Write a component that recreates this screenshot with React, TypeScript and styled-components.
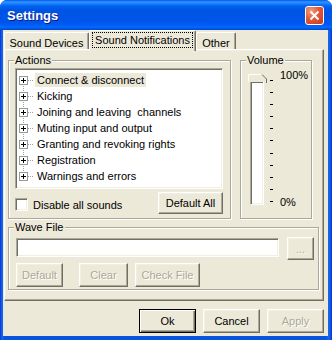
import React from 'react';
import styled, { createGlobalStyle } from 'styled-components';

const GlobalStyle = createGlobalStyle`
  html, body {
    margin: 0;
    padding: 0;
    background: #ffffff;
  }
  body {
    font-family: "Liberation Sans", Arial, sans-serif;
    font-size: 11px;
    color: #000;
  }
`;

const Window = styled.div`
  width: 332px;
  height: 340px;
  display: flex;
  flex-direction: column;
  background: #0a4fe0;
  border-radius: 7px 7px 0 0;
  overflow: hidden;
`;

// XP luna title bar
const TitleBar = styled.div`
  height: 30px;
  flex: none;
  display: flex;
  align-items: center;
  justify-content: space-between;
  padding: 0 8px 0 7px;
  box-sizing: border-box;
  background: linear-gradient(
    to bottom,
    #0058ee 0px,
    #3593ff 2px,
    #127dff 4px,
    #0262ee 6px,
    #0054e3 10px,
    #0055eb 22px,
    #005bf5 25px,
    #026afe 27px,
    #0062ef 28px,
    #0043cf 30px
  );
`;

const TitleText = styled.span`
  color: #fff;
  font-weight: bold;
  font-size: 13px;
  text-shadow: 1px 1px 0 #0a1883;
  margin-top: 1px;
`;

const CloseButton = styled.div`
  width: 19px;
  height: 19px;
  box-sizing: border-box;
  border: 1px solid #fff;
  border-radius: 3px;
  background: radial-gradient(circle at 30% 25%, #f0a080 0%, #e2583a 45%, #c9371b 100%);
  display: flex;
  align-items: center;
  justify-content: center;
  margin-top: 1px;
`;

const Frame = styled.div`
  flex: 1;
  display: flex;
  padding: 0 4px 4px 3px;
  background: linear-gradient(to right, #0831d9 0px, #166aee 2px, #0855dd 4px, #0855dd 326px, #166aee 329px, #0831d9 332px);
`;

const Client = styled.div`
  flex: 1;
  display: flex;
  flex-direction: column;
  background: #ece9d8;
  padding: 0 4px 0 1px;
`;

const TabStrip = styled.div`
  height: 19px;
  display: flex;
  align-items: flex-end;
`;

const Tab = styled.div<{ $active?: boolean; $w: number }>`
  position: relative;
  z-index: ${p => (p.$active ? 1 : 0)};
  box-sizing: border-box;
  width: ${p => p.$w}px;
  height: ${p => (p.$active ? 21 : 17)}px;
  margin-bottom: ${p => (p.$active ? -2 : 0)}px;
  background: #ece9d8;
  border-top: 1px solid #fff;
  border-left: 1px solid #fff;
  border-right: 1px solid #716f64;
  box-shadow: inset -1px 0 0 #aca899;
  border-radius: 2px 2px 0 0;
  display: flex;
  justify-content: center;
  padding-top: ${p => (p.$active ? 1 : 2)}px;
`;

const TabLabel = styled.span<{ $focus?: boolean }>`
  height: 14px;
  line-height: 14px;
  padding: 0 2px;
  border: 1px dotted ${p => (p.$focus ? '#000' : 'transparent')};
`;

const Panel = styled.div`
  height: 252px;
  box-sizing: border-box;
  border: 1px solid;
  border-color: #fff #716f64 #716f64 #fff;
  box-shadow: inset -1px -1px 0 #aca899, inset 1px 1px 0 #f1efe2;
  padding: 10px 0 0 3px;
  display: flex;
  flex-direction: column;
  gap: 8px;
`;

const TopRow = styled.div`
  display: flex;
  gap: 9px;
`;

// etched group box
const Group = styled.div<{ $w: number; $h: number }>`
  position: relative;
  box-sizing: border-box;
  width: ${p => p.$w}px;
  height: ${p => p.$h}px;
  border: 1px solid #aca899;
  box-shadow: inset 1px 1px 0 #fff, 1px 1px 0 #fff;
`;

const GroupLabel = styled.span`
  position: absolute;
  top: -7px;
  left: 5px;
  padding: 0 1px;
  line-height: 13px;
  background: #ece9d8;
`;

const ActionsBody = styled.div`
  padding: 7px 0 0 6px;
  display: flex;
  flex-direction: column;
`;

const Sunken = styled.div`
  box-sizing: border-box;
  background: #fff;
  border: 1px solid;
  border-color: #aca899 #fff #fff #aca899;
  box-shadow: inset 1px 1px 0 #716f64, inset -1px -1px 0 #f1efe2;
`;

const TreeBox = styled(Sunken)`
  width: 208px;
  height: 121px;
  padding: 3px 0 0 3px;
`;

const TreeRow = styled.div`
  height: 16px;
  display: flex;
  align-items: center;
`;

const TreeText = styled.span<{ $selected?: boolean }>`
  margin-left: 1px;
  padding: 0 2px;
  line-height: 14px;
  white-space: pre;
  background: ${p => (p.$selected ? '#ece9d8' : 'transparent')};
`;

const ActionsFooter = styled.div`
  display: flex;
  justify-content: space-between;
  align-items: flex-start;
  width: 208px;
  margin-top: 3px;
`;

const CheckRow = styled.label`
  display: flex;
  align-items: center;
  gap: 5px;
  margin-top: 6px;
`;

const CheckBox = styled(Sunken)`
  width: 13px;
  height: 13px;
`;

const Button = styled.button<{ $w: number; $h?: number; $default?: boolean; $ml?: number }>`
  box-sizing: border-box;
  width: ${p => p.$w}px;
  height: ${p => p.$h ?? 23}px;
  padding: 0;
  margin: 0 0 0 ${p => p.$ml ?? 0}px;
  font-family: "Liberation Sans", Arial, sans-serif;
  font-size: 11px;
  background: #ece9d8;
  color: #000;
  border: 1px solid;
  border-color: ${p => (p.$default ? '#000' : '#fff #716f64 #716f64 #fff')};
  box-shadow: ${p =>
    p.$default
      ? 'inset 1px 1px 0 #fff, inset -1px -1px 0 #716f64, inset -2px -2px 0 #aca899'
      : 'inset -1px -1px 0 #aca899, inset 1px 1px 0 #f1efe2'};
  &:disabled {
    color: #aca899;
    text-shadow: 1px 1px 0 #fff;
  }
`;

const VolumeBody = styled.div`
  display: flex;
  padding: 13px 0 0 7px;
`;

const SliderBox = styled.div`
  position: relative;
  width: 19px;
  height: 132px;
`;

const Track = styled(Sunken)`
  margin: 7px 0 0 2px;
  width: 14px;
  height: 124px;
`;

const Thumb = styled.svg`
  position: absolute;
  top: 0;
  left: 0;
`;

const Ticks = styled.div`
  margin: 6px 0 0 3px;
  height: 122px;
  display: flex;
  flex-direction: column;
  justify-content: space-between;
`;

const Tick = styled.div`
  width: 3px;
  height: 1px;
  background: #000;
`;

const ScaleLabels = styled.div`
  margin: -5px 0 0 7px;
  height: 140px;
  display: flex;
  flex-direction: column;
  justify-content: space-between;
  line-height: 13px;
`;

const WaveBody = styled.div`
  padding: 9px 0 0 7px;
  display: flex;
  flex-direction: column;
`;

const WaveRow = styled.div`
  display: flex;
  align-items: flex-start;
`;

const TextField = styled(Sunken)`
  width: 263px;
  height: 19px;
  margin-top: 1px;
`;

const ButtonRow = styled.div`
  display: flex;
  gap: 7px;
  margin-top: 3px;
`;

const DialogButtons = styled.div`
  display: flex;
  justify-content: flex-end;
  gap: 7px;
  margin-top: 8px;
`;

const actions = [
  'Connect & disconnect',
  'Kicking',
  'Joining and leaving  channels',
  'Muting input and output',
  'Granting and revoking rights',
  'Registration',
  'Warnings and errors',
];

const Expander: React.FC<{ first: boolean; last: boolean }> = ({ first, last }) => (
  <svg width="15" height="16" viewBox="0 0 15 16">
    <line
      x1="4.5"
      y1={first ? 8 : 0}
      x2="4.5"
      y2={last ? 8 : 16}
      stroke="#a0a0a0"
      strokeDasharray="1 1"
    />
    <line x1="9" y1="8.5" x2="15" y2="8.5" stroke="#a0a0a0" strokeDasharray="1 1" />
    <rect x="0.5" y="4.5" width="8" height="8" fill="#fff" stroke="#919b9c" />
    <line x1="2" y1="8.5" x2="7" y2="8.5" stroke="#000" />
    <line x1="4.5" y1="6" x2="4.5" y2="11" stroke="#000" />
  </svg>
);

export default function App() {
  return (
    <>
      <GlobalStyle />
      <Window>
        <TitleBar>
          <TitleText>Settings</TitleText>
          <CloseButton>
            <svg width="11" height="11" viewBox="0 0 11 11">
              <path d="M1.5 1.5 L9.5 9.5 M9.5 1.5 L1.5 9.5" stroke="#fff" strokeWidth="2" />
            </svg>
          </CloseButton>
        </TitleBar>
        <Frame>
          <Client>
            <TabStrip>
              <Tab $w={85}>
                <TabLabel>Sound Devices</TabLabel>
              </Tab>
              <Tab $w={107} $active>
                <TabLabel $focus>Sound Notifications</TabLabel>
              </Tab>
              <Tab $w={40}>
                <TabLabel>Other</TabLabel>
              </Tab>
            </TabStrip>
            <Panel>
              <TopRow>
                <Group $w={223} $h={159}>
                  <GroupLabel>Actions</GroupLabel>
                  <ActionsBody>
                    <TreeBox>
                      {actions.map((a, i) => (
                        <TreeRow key={a}>
                          <Expander first={i === 0} last={i === actions.length - 1} />
                          <TreeText $selected={i === 0}>{a}</TreeText>
                        </TreeRow>
                      ))}
                    </TreeBox>
                    <ActionsFooter>
                      <CheckRow>
                        <CheckBox />
                        Disable all sounds
                      </CheckRow>
                      <Button $w={65} $h={22}>Default All</Button>
                    </ActionsFooter>
                  </ActionsBody>
                </Group>
                <Group $w={72} $h={159}>
                  <GroupLabel>Volume</GroupLabel>
                  <VolumeBody>
                    <SliderBox>
                      <Track />
                      <Thumb width="19" height="9" viewBox="0 0 19 9">
                        <polygon points="0,0 14,0 18,4 18,8 0,8" fill="#ece9d8" />
                        <polyline points="0.5,8 0.5,0.5 14,0.5" fill="none" stroke="#fff" />
                        <polyline points="14,0.5 18.5,5 18.5,9" fill="none" stroke="#716f64" />
                      </Thumb>
                    </SliderBox>
                    <Ticks>
                      {Array.from({ length: 11 }).map((_, i) => (
                        <Tick key={i} />
                      ))}
                    </Ticks>
                    <ScaleLabels>
                      <span>100%</span>
                      <span>0%</span>
                    </ScaleLabels>
                  </VolumeBody>
                </Group>
              </TopRow>
              <Group $w={311} $h={63}>
                <GroupLabel>Wave File</GroupLabel>
                <WaveBody>
                  <WaveRow>
                    <TextField />
                    <Button $w={27} $ml={8} disabled>
                      ...
                    </Button>
                  </WaveRow>
                  <ButtonRow>
                    <Button $w={47} $h={24} disabled>
                      Default
                    </Button>
                    <Button $w={49} $h={24} $ml={9} disabled>
                      Clear
                    </Button>
                    <Button $w={65} $h={24} disabled>
                      Check File
                    </Button>
                  </ButtonRow>
                </WaveBody>
              </Group>
            </Panel>
            <DialogButtons>
              <Button $w={57} $h={24} $default>
                Ok
              </Button>
              <Button $w={57} $h={24}>Cancel</Button>
              <Button $w={57} $h={24} disabled>
                Apply
              </Button>
            </DialogButtons>
          </Client>
        </Frame>
      </Window>
    </>
  );
}
